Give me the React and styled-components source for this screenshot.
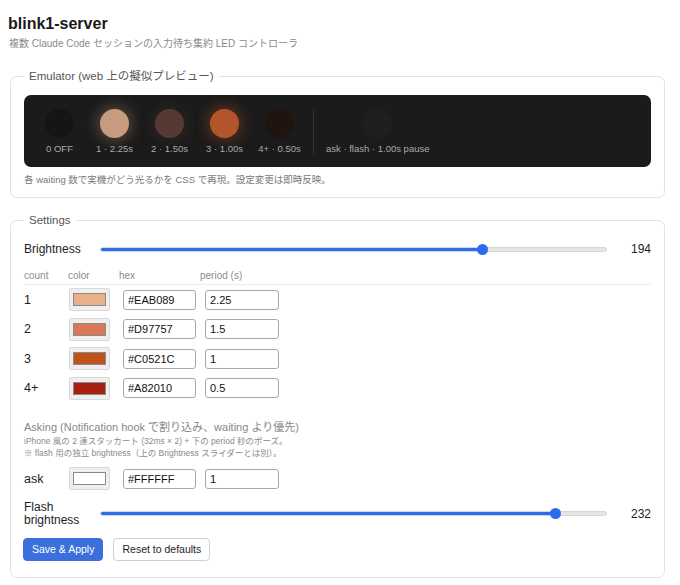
import styled, { createGlobalStyle } from 'styled-components';

const GlobalStyle = createGlobalStyle`
  body {
    margin: 0;
    background: #fff;
    font-family: "Liberation Sans", Arial, "Noto Sans CJK JP", sans-serif;
    color: #1d1d1f;
  }
`;

const Page = styled.div`
  padding: 0 13px 8px 8px;
`;

const Title = styled.h1`
  margin: 0;
  padding-top: 14px;
  font-size: 16px;
  line-height: 20px;
  font-weight: 700;
  color: #1a1a1a;
`;

const Subtitle = styled.p`
  margin: 3px 0 0 1px;
  font-size: 10px;
  line-height: 14px;
  color: #8a8a8a;
`;

const Panel = styled.fieldset`
  margin: ${p => p.$top}px 2px 0;
  padding: ${p => p.$padTop}px 13px ${p => p.$padBottom}px;
  border: 1px solid #e2e2e2;
  border-radius: 7px;
  min-width: 0;
`;

const Legend = styled.legend`
  margin-left: 0;
  padding: 0 5px;
  font-size: 11.5px;
  line-height: 14px;
  color: #555;
`;

const Stage = styled.div`
  display: flex;
  gap: 12px;
  padding: 14px 14px 12px;
  background: #1b1b1b;
  border-radius: 7px;
`;

const Led = styled.div`
  display: flex;
  flex-direction: column;
  align-items: center;
  gap: 5px;
  width: ${p => (p.$wide ? 'auto' : '43px')};
`;

const Bulb = styled.div`
  width: 29px;
  height: 29px;
  border-radius: 50%;
  background: ${p => p.$color};
  box-shadow: ${p => (p.$glow ? `0 0 14px 3px ${p.$glow}` : 'none')};
`;

const LedLabel = styled.span`
  font-size: 9.5px;
  line-height: 12px;
  color: #a8a8a8;
  white-space: nowrap;
`;

const Divider = styled.div`
  width: 1px;
  background: #333;
`;

const Caption = styled.p`
  margin: 7px 0 0;
  font-size: 9.5px;
  line-height: 12px;
  color: #777;
`;

const SliderRow = styled.div`
  display: grid;
  grid-template-columns: 76px 1fr 44px;
  align-items: center;
  margin-top: ${p => p.$top || 0}px;
`;

const FieldLabel = styled.span`
  font-size: 12px;
  line-height: 13px;
  color: #1d1d1f;
`;

const Range = styled.input.attrs({ type: 'range', min: 0, max: 255 })`
  -webkit-appearance: none;
  appearance: none;
  width: 100%;
  height: 5px;
  margin: 0;
  border-radius: 3px;
  border: 1px solid #d6d6d6;
  box-sizing: border-box;
  outline: none;

  &::-webkit-slider-thumb {
    -webkit-appearance: none;
    width: 11px;
    height: 11px;
    border-radius: 50%;
    background: #2b6cf0;
    border: none;
  }
`;

const Value = styled.span`
  text-align: right;
  font-size: 12px;
  color: #222;
`;

const Grid = styled.div`
  display: grid;
  grid-template-columns: 44px 51px 81px 80px 1fr;
  align-items: center;
  height: ${p => (p.$head ? '16px' : '29.5px')};
  ${p => p.$head && 'border-bottom: 1px solid #ececec; padding-bottom: 1px;'}
  margin-top: ${p => p.$top || (p.$head ? 11 : 0)}px;
`;

const HeadCell = styled.span`
  font-size: 10px;
  color: #8c8c8c;
`;

const CountCell = styled.span`
  font-size: 12.5px;
  color: #1d1d1f;
`;

const Swatch = styled.div`
  width: 41px;
  height: 23px;
  margin-left: 1px;
  box-sizing: border-box;
  padding: 4px 3px;
  background: #efefef;
  border: 1px solid #d8d8d8;
  border-radius: 2px;
`;

const SwatchFill = styled.div`
  height: 100%;
  box-sizing: border-box;
  background: ${p => p.$color};
  border: 1px solid #8a8a8a;
`;

const TextInput = styled.input`
  width: ${p => p.$w}px;
  height: 20px;
  margin-left: ${p => p.$ml}px;
  box-sizing: border-box;
  padding: 0 4px;
  border: 1px solid #a8a8a8;
  border-radius: 3px;
  font-family: inherit;
  font-size: 11px;
  color: #111;
  background: #fff;
`;

const SectionTitle = styled.div`
  margin-top: 17px;
  font-size: 11px;
  line-height: 14px;
  color: #888;
`;

const Note = styled.div`
  margin-top: ${p => p.$top || 0}px;
  font-size: 8.5px;
  line-height: 11.5px;
  color: #8a8a8a;
`;

const Buttons = styled.div`
  display: flex;
  gap: 10px;
  margin-top: 11px;
  margin-left: -1px;
`;

const Button = styled.button`
  height: 23px;
  padding: 0 8px;
  border-radius: 4px;
  font-family: inherit;
  font-size: 10.5px;
  border: 1px solid ${p => (p.$primary ? '#3a6fdc' : '#cfcfcf')};
  background: ${p => (p.$primary ? '#3a6fdc' : '#fff')};
  color: ${p => (p.$primary ? '#fff' : '#1d1d1f')};
`;

const leds = [
  { label: '0 OFF', color: '#151515' },
  { label: '1 · 2.25s', color: '#c99b7e', glow: 'rgba(201,155,126,0.35)' },
  { label: '2 · 1.50s', color: '#573933', glow: 'rgba(87,57,51,0.3)' },
  { label: '3 · 1.00s', color: '#b3552a', glow: 'rgba(179,85,42,0.4)' },
  { label: '4+ · 0.50s', color: '#21130f' },
];

const rows = [
  { count: '1', color: '#EAB089', period: '2.25' },
  { count: '2', color: '#D97757', period: '1.5' },
  { count: '3', color: '#C0521C', period: '1' },
  { count: '4+', color: '#A82010', period: '0.5' },
];

const fill = v => {
  const pct = (v / 255) * 100;
  return { background: `linear-gradient(to right, #2b6cf0 ${pct}%, #e6e6e6 ${pct}%)` };
};

const ColorRow = ({ count, color, period, top }) => (
  <Grid $top={top}>
    <CountCell>{count}</CountCell>
    <Swatch>
      <SwatchFill $color={color} />
    </Swatch>
    <TextInput $w={73} $ml={4} defaultValue={color} />
    <TextInput $w={74} $ml={5} defaultValue={period} />
  </Grid>
);

export default function App() {
  return (
    <Page>
      <GlobalStyle />
      <Title>blink1-server</Title>
      <Subtitle>複数 Claude Code セッションの入力待ち集約 LED コントローラ</Subtitle>

      <Panel $top={18} $padTop={12} $padBottom={11}>
        <Legend>Emulator (web 上の擬似プレビュー)</Legend>
        <Stage>
          {leds.map(l => (
            <Led key={l.label}>
              <Bulb $color={l.color} $glow={l.glow} />
              <LedLabel>{l.label}</LedLabel>
            </Led>
          ))}
          <Divider />
          <Led $wide>
            <Bulb $color="#1f1f1f" />
            <LedLabel>ask · flash · 1.00s pause</LedLabel>
          </Led>
        </Stage>
        <Caption>各 waiting 数で実機がどう光るかを CSS で再現。設定変更は即時反映。</Caption>
      </Panel>

      <Panel $top={15} $padTop={15} $padBottom={16}>
        <Legend>Settings</Legend>
        <SliderRow>
          <FieldLabel>Brightness</FieldLabel>
          <Range defaultValue={194} style={fill(194)} />
          <Value>194</Value>
        </SliderRow>

        <Grid $head>
          <HeadCell>count</HeadCell>
          <HeadCell>color</HeadCell>
          <HeadCell>hex</HeadCell>
          <HeadCell>period (s)</HeadCell>
        </Grid>
        {rows.map(r => (
          <ColorRow key={r.count} {...r} />
        ))}

        <SectionTitle>Asking (Notification hook で割り込み、waiting より優先)</SectionTitle>
        <Note $top={2}>iPhone 風の 2 連スタッカート (32ms × 2) + 下の period 秒のポーズ。</Note>
        <Note>※ flash 用の独立 brightness（上の Brightness スライダーとは別）。</Note>
        <ColorRow count="ask" color="#FFFFFF" period="1" top={5} />

        <SliderRow $top={7}>
          <FieldLabel>
            Flash
            <br />
            brightness
          </FieldLabel>
          <Range defaultValue={232} style={fill(232)} />
          <Value>232</Value>
        </SliderRow>

        <Buttons>
          <Button $primary>Save &amp; Apply</Button>
          <Button>Reset to defaults</Button>
        </Buttons>
      </Panel>
    </Page>
  );
}
